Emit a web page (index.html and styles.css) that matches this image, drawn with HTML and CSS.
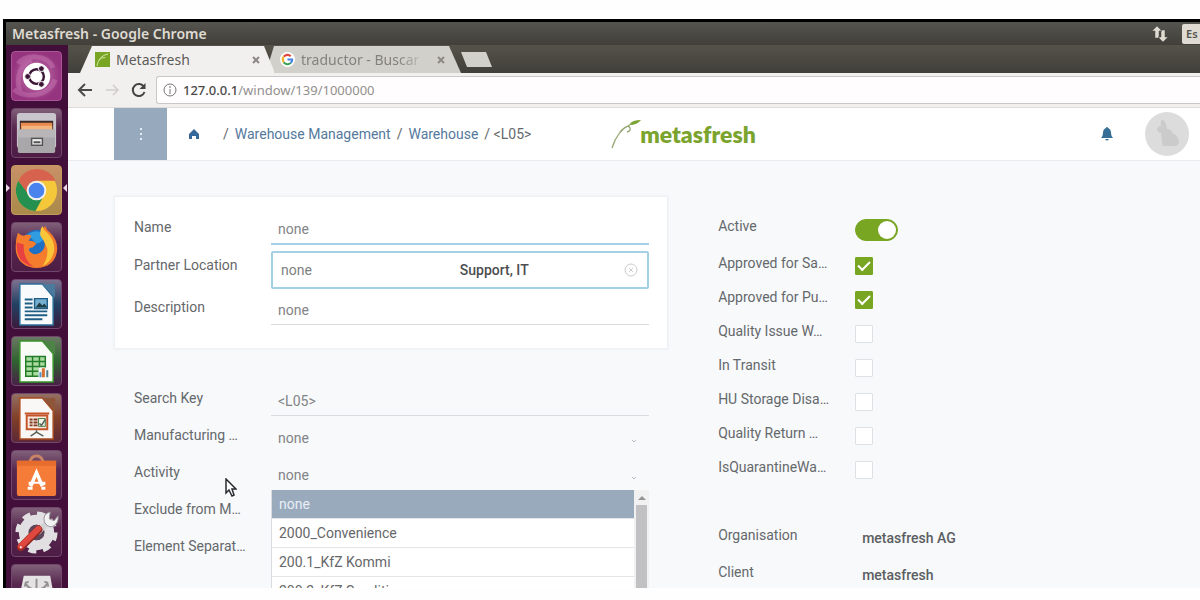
FILE: index.html
```html
<!DOCTYPE html>
<html lang="en">
<head>
  <meta charset="UTF-8" />
  <meta name="viewport" content="width=device-width, initial-scale=1.0"/>
  <title>Metasfresh</title>
  <link rel="stylesheet" href="styles.css">
</head>
<body>
  <div class="desktop">
    <header class="titlebar">
      <span class="titlebar-text">Metasfresh - Google Chrome</span>
      <div class="indicators">
        <svg class="network" viewBox="0 0 16 16"><path d="M5 0L0 5h3v7h4V5h3zM11 16l5-5h-3V4H9v7H6z" fill="#dfdbd2" stroke="#4a4944" stroke-width=".5"/></svg>
        <span class="keyboard">Es</span>
      </div>
    </header>

    <div class="workspace">
      <nav class="launcher" aria-label="Launcher">
        <button class="tile tile-dash" aria-label="Dash">
          <svg viewBox="0 0 50 50">
            <path d="M2 38C12 48 38 46 44 28M6 12C14 2 36 2 42 16M8 40C4 26 8 12 20 8" fill="none" stroke="#d68cc3" stroke-width="5" opacity=".35"/>
            <circle cx="25" cy="25" r="14" fill="#fff"/>
            <circle cx="25" cy="25" r="7.500" fill="none" stroke="#3d1636" stroke-width="2.500"/>
            <g fill="#3d1636" stroke="#fff" stroke-width="1"><circle cx="16" cy="25" r="3"/><circle cx="30" cy="17" r="3"/><circle cx="30" cy="33" r="3"/></g>
          </svg>
        </button>
        <button class="tile" aria-label="Files">
          <svg viewBox="0 0 50 50">
            <rect x="5" y="4" width="40" height="36" rx="3" fill="#c9c5cd"/>
            <path d="M8 12h34v10H8z" fill="#3b2a2b"/>
            <path d="M9 14h32v8H9z" fill="#e98a4e"/><path d="M10 17h31v5H10z" fill="#f5b57f"/>
            <path d="M6 21h38v22q0 2-2 2H8q-2 0-2-2z" fill="#a9a7aa"/><path d="M6 21h38v8H6z" fill="#b8b6b9"/>
            <rect x="20" y="30" width="11" height="7" fill="#eee" stroke="#555" stroke-width="1.500"/>
            <path d="M22 34h7" stroke="#555" stroke-width="2"/>
          </svg>
        </button>
        <button class="tile tile-chrome" aria-label="Google Chrome">
          <svg viewBox="0 0 50 50">
            <circle cx="25" cy="25" r="21" fill="#f5c83b"/>
            <path d="M6.500 15A21 21 0 0 0 24 46L33 29 25 25 17 28z" fill="#25904f"/>
            <path d="M25 15h19.500a21 21 0 0 0-38-0L16 28z" fill="#d7634e"/>
            <circle cx="25" cy="25" r="10" fill="#f6f3ee"/><circle cx="25" cy="25" r="8" fill="#4a83ee"/>
          </svg>
        </button>
        <button class="tile" aria-label="Firefox">
          <svg viewBox="0 0 50 50">
            <circle cx="26" cy="24" r="17" fill="#1f6fc4"/><path d="M16 12q9-7 18 0-2 8-9 9z" fill="#2f9be0"/>
            <path d="M6 10q3 3 6 3 4-2 8 0l-3 5q6 0 8 3l-4 4q-5 0-3 4 5 5 11 1 6-4 4-12-3-5-3-9 1-4 4-6 1 4 5 7 8 8 7 18-2 17-21 18Q7 45 4 29 3 18 6 10z" fill="#f47c2c"/>
            <path d="M31 3q1 4 5 7 8 8 7 18-2 12-12 16 6-8 5-18-3-8-7-13-1-6 2-10z" fill="#fbc53a"/>
            <path d="M5 20q-2 20 17 25-11-8-10-23z" fill="#e8413f"/>
          </svg>
        </button>
        <button class="tile tile-writer" aria-label="LibreOffice Writer">
          <svg viewBox="0 0 50 50">
            <path d="M8 4h23l11 13v29H8z" fill="#f8fafb" stroke="#2b6e99" stroke-width="1.500"/>
            <path d="M31 4h13v14z" fill="#4c7a9c"/>
            <path d="M13 20h8M13 24h8M13 28h8M13 32h23M13 36h23M13 40h18" stroke="#215e86" stroke-width="2"/>
            <path d="M23 19h13v10H23z" fill="#75afd0" stroke="#215e86" stroke-width="1.500"/><path d="M24 28l4-5 3 3 2-2 3 4z" fill="#1e3e46"/>
          </svg>
        </button>
        <button class="tile tile-calc" aria-label="LibreOffice Calc">
          <svg viewBox="0 0 50 50">
            <path d="M8 4h23l11 13v29H8z" fill="#f8fbf6" stroke="#379329" stroke-width="1.500"/>
            <path d="M31 4h13v14z" fill="#4e8348"/>
            <path d="M14 20h20v20H14z" fill="#a9dba0"/>
            <path d="M14 20h20v20H14zM14 25h20M14 30h20M14 35h20M21 20v20M28 20v20" fill="none" stroke="#237c28" stroke-width="1.500"/>
            <path d="M27 31h10v10H27z" fill="#f3f4f4"/><path d="M29 41v-5" stroke="#4c90c5" stroke-width="2"/><path d="M32 41V32" stroke="#d47130" stroke-width="3"/><path d="M36 41v-7" stroke="#557b91" stroke-width="2"/>
          </svg>
        </button>
        <button class="tile tile-impress" aria-label="LibreOffice Impress">
          <svg viewBox="0 0 50 50">
            <path d="M8 4h23l11 13v29H8z" fill="#faf8f6" stroke="#a94b20" stroke-width="1.500"/>
            <path d="M31 4h13v14z" fill="#8f5538"/>
            <path d="M15 22h21v14H15z" fill="#fae9dc" stroke="#c4552a" stroke-width="2"/><path d="M13 20h25" stroke="#c4552a" stroke-width="2"/>
            <path d="M18 26h3M18 29h3M18 32h3M22 26h4M22 29h4M22 32h4" stroke="#7c3b28" stroke-width="2"/>
            <path d="M27 25h7v8h-7z" fill="#eff4e7" stroke="#477e4d"/><path d="M28 30l2 2 4-6M25 37v2l-6 4M25 39l7 4" fill="none" stroke="#576056" stroke-width="1.500"/>
          </svg>
        </button>
        <button class="tile" aria-label="Ubuntu Software">
          <svg viewBox="0 0 50 50">
            <path d="M18 13q1-8 7-8t7 8" fill="none" stroke="#c98467" stroke-width="3"/>
            <path d="M5 10h40v34q0 2-2 2H7q-2 0-2-2z" fill="#f47c38"/><path d="M5 10h40v5H5z" fill="#e56c2d"/>
            <path d="M19 36l6-14 6 14M17 33h17" fill="none" stroke="#fff" stroke-width="3.500"/><path d="M22 35h6" stroke="#f47c38" stroke-width="3"/>
            <path d="M16 38h5M30 38h4" stroke="#fff" stroke-width="3"/>
          </svg>
        </button>
        <button class="tile" aria-label="System Settings">
          <svg viewBox="0 0 50 50">
            <circle cx="25" cy="25" r="13" fill="none" stroke="#e1dfe2" stroke-width="10"/>
            <circle cx="25" cy="25" r="19" fill="none" stroke="#e1dfe2" stroke-width="5" stroke-dasharray="8 6.920"/>
            <circle cx="25" cy="25" r="8" fill="#5c4659"/>
            <path d="M26 25L37 14" stroke="#d2d1d3" stroke-width="6"/>
            <path d="M33 14q-2-8 6-10l-1 7 5 2 4-5q1 8-6 11-5 1-8-5z" fill="#f2f2f2" stroke="#99939a"/>
            <path d="M9 40L27 22" stroke="#922825" stroke-width="8" stroke-linecap="round"/><path d="M9 39L27 21" stroke="#df483e" stroke-width="6" stroke-linecap="round"/><circle cx="9" cy="40" r="1" fill="#fff"/>
          </svg>
        </button>
        <button class="tile" aria-label="Removable drive">
          <svg viewBox="0 0 50 50">
            <path d="M12 11h27l7 39H4z" fill="#e4e2e3"/>
            <path d="M25 14v14M14 18q2 7 11 7 9 0 11-7M17 17l-3 1-1 4M33 17l3 1 1 4" fill="none" stroke="#929092" stroke-width="2"/>
          </svg>
        </button>
        <span class="running"></span>
        <span class="focused"></span>
      </nav>

      <main class="browser">
        <div class="tabs">
          <div class="tab tab-active">
            <svg class="favicon" viewBox="0 0 16 16"><path d="M0 0h16v16H0z" fill="#78a524"/><path d="M2 15Q4 4 14 2M4 9q3-4 7-3" fill="none" stroke="#d9eaa9"/></svg>
            <span class="tab-title">Metasfresh</span>
            <button class="tab-close" aria-label="Close tab"><svg viewBox="0 0 8 8"><path d="M1 1l6 6M7 1L1 7"/></svg></button>
          </div>
          <div class="tab tab-back">
            <svg class="favicon" viewBox="0 0 16 16">
              <circle cx="8" cy="8" r="8" fill="#fff"/>
              <g fill="none" stroke-width="2.200"><path d="M4 5A5 5 0 0 1 11.500 4.500" stroke="#e0483d"/><path d="M4 5a5 5 0 0 0 0 6" stroke="#eeb22c"/><path d="M4 11a5 5 0 0 0 7.500 .6" stroke="#35a354"/><path d="M8 8h5q0 2-1.500 3.600" stroke="#4580e8"/></g>
            </svg>
            <span class="tab-title tab-faded">traductor - Buscar</span>
            <button class="tab-close" aria-label="Close tab"><svg viewBox="0 0 8 8"><path d="M1 1l6 6M7 1L1 7"/></svg></button>
          </div>
          <button class="new-tab" aria-label="New tab"></button>
        </div>

        <div class="toolbar">
          <button class="tool" aria-label="Back"><svg viewBox="0 0 16 16"><path d="M15 8H2M8 2L2 8l6 6" stroke="#4d4b48"/></svg></button>
          <button class="tool" aria-label="Forward"><svg viewBox="0 0 16 16"><path d="M2 8h12M9 3l5 5-5 5" stroke="#d0cdca" stroke-width="1.500"/></svg></button>
          <button class="tool" aria-label="Reload"><svg viewBox="0 0 16 16"><path d="M13 5A6 6 0 1 0 13.500 10" stroke="#454340"/><path d="M14.500 1v6h-6z" fill="#454340"/></svg></button>
          <div class="address">
            <svg class="info" viewBox="0 0 14 14"><circle cx="7" cy="7" r="6"/><path d="M7 6v5M7 3v2"/></svg>
            <a class="url" href="#"><b>127.0.0.1</b>/window/139/1000000</a>
          </div>
        </div>

        <header class="app-header">
          <button class="menu-button" aria-label="Menu"><i></i><i></i><i></i></button>
          <nav class="breadcrumb" aria-label="Breadcrumb">
            <a class="home" href="#" aria-label="Home"><svg viewBox="0 0 12 12"><path d="M6 1L1 6v5h3V8h4v3h3V6z" fill="#35699b"/></svg></a>
            <span>/</span>
            <a href="#">Warehouse Management</a>
            <span>/</span>
            <a href="#">Warehouse</a>
            <span class="crumb-last">/ &lt;L05&gt;</span>
          </nav>
          <a class="logo" href="#">
            <svg viewBox="0 0 30 30"><path d="M1 29Q6 12 20 5M9 13Q17 4 19 9q1 3-3 4" fill="none" stroke="#94a773" stroke-width="1.300"/><path d="M19 5q2-4 11-4-3 4-9 5-2 0-2-1z" fill="#7ba334"/></svg>
            <span>metasfresh</span>
          </a>
          <div class="user">
            <button class="bell" aria-label="Notifications"><svg viewBox="0 0 12 14"><path d="M6 0q1 0 1 1 3 1 3 5 0 3 2 5H0q2-2 2-5 0-4 3-5 0-1 1-1zM4 12h4q-2 3-4 0z" fill="#356f98"/></svg></button>
            <button class="avatar" aria-label="Account"><svg viewBox="0 0 44 44"><path d="M18 8q3 2 4 9 5 0 5 4 6 2 7 9 0 3-3 4H20q-4 0-3-6-1-5-1-7-4-1-4-4 1-3 4-3-1-5 1-6z" fill="#cbcbcc"/></svg></button>
          </div>
        </header>

        <div class="content">
          <div class="left">
            <section class="panel">
              <div class="row">
                <label for="name">Name</label>
                <input id="name" class="field field-changed" value="none">
              </div>
              <div class="row row-lookup">
                <label for="partner">Partner Location</label>
                <div class="lookup">
                  <input id="partner" value="none">
                  <input class="lookup-value" aria-label="Location" value="Support, IT">
                  <button aria-label="Clear"><svg viewBox="0 0 14 14"><circle cx="7" cy="7" r="6"/><path d="M5 5l4 4M9 5L5 9"/></svg></button>
                </div>
              </div>
              <div class="row">
                <label for="description">Description</label>
                <input id="description" class="field" value="none">
              </div>
            </section>

            <section class="details">
              <div class="row">
                <label for="search-key">Search Key</label>
                <input id="search-key" class="field" value="&lt;L05&gt;">
              </div>
              <div class="row">
                <label for="manufacturing">Manufacturing …</label>
                <div class="dropdown">
                  <select id="manufacturing"><option>none</option></select>
                  <svg class="chevron" viewBox="0 0 6 4"><path d="M1 1l2 2 2-2"/></svg>
                </div>
              </div>
              <div class="row">
                <label for="activity">Activity</label>
                <div class="dropdown">
                  <select id="activity"><option>none</option></select>
                  <svg class="chevron" viewBox="0 0 6 4"><path d="M1 1l2 2 2-2"/></svg>
                  <div class="options">
                    <ul role="listbox" aria-label="Activity">
                      <li role="option" aria-selected="true" class="selected">none</li>
                      <li role="option">2000_Convenience</li>
                      <li role="option">200.1_KfZ Kommi</li>
                      <li role="option">200.2_KfZ Spedition</li>
                    </ul>
                    <div class="scrollbar"><i class="scroll-up"></i><i class="thumb"></i></div>
                  </div>
                </div>
              </div>
              <div class="row"><span class="label">Exclude from M…</span></div>
              <div class="row"><span class="label">Element Separat…</span></div>
            </section>
          </div>

          <section class="right">
            <div class="check-row check-row-switch"><label for="active">Active</label><input id="active" class="switch" type="checkbox" checked></div>
            <div class="check-row"><label for="sales">Approved for Sa…</label><input id="sales" type="checkbox" checked></div>
            <div class="check-row"><label for="purchase">Approved for Pu…</label><input id="purchase" type="checkbox" checked></div>
            <div class="check-row"><label for="issue">Quality Issue W…</label><input id="issue" type="checkbox"></div>
            <div class="check-row"><label for="transit">In Transit</label><input id="transit" type="checkbox"></div>
            <div class="check-row"><label for="storage">HU Storage Disa…</label><input id="storage" type="checkbox"></div>
            <div class="check-row"><label for="return">Quality Return …</label><input id="return" type="checkbox"></div>
            <div class="check-row"><label for="quarantine">IsQuarantineWa…</label><input id="quarantine" type="checkbox"></div>
            <dl class="owner">
              <dt>Organisation</dt><dd>metasfresh AG</dd>
              <dt>Client</dt><dd>metasfresh</dd>
            </dl>
          </section>
        </div>
      </main>
    </div>

    <svg class="pointer" viewBox="0 0 12 19"><path d="M1 1v14l3-3 3 6 2-1-2-6h4z" fill="#fff" stroke="#2b2b30" stroke-width="1.500"/></svg>
  </div>
</body>
</html>
```
FILE: styles.css
```css
* {
  box-sizing: border-box;
}

html, body {
  margin: 0;
  height: 100%;
}

body {
  padding: 19px 0 12px 3px;
  background: #fefefe;
  color: #65686b;
  font-family: Roboto, sans-serif;
  font-size: 14px;
  line-height: 20px;
  overflow: hidden;
}

button, input, select {
  margin: 0;
  padding: 0;
  border: 0;
  background: none;
  color: inherit;
  font: inherit;
}

svg {
  display: block;
}

a {
  color: #55799c;
  text-decoration: none;
}

.desktop {
  position: relative;
  display: flex;
  flex-direction: column;
  height: 100%;
  border-top: 3px solid #000;
  border-left: 3px solid #000;
  overflow: hidden;
}

/* top panel */
.titlebar {
  display: flex;
  flex: none;
  align-items: center;
  justify-content: space-between;
  height: 23px;
  padding-left: 6px;
  background: linear-gradient(#55544e, #403f3a);
  color: #dfdbd2;
  font-family: "Noto Sans", sans-serif;
  font-weight: 600;
}

.indicators {
  display: flex;
  align-items: center;
  gap: 14px;
}

.network {
  width: 16px;
  height: 16px;
}

.keyboard {
  width: 18px;
  padding-left: 4px;
  background: #dfdbd2;
  color: #55534f;
  font-size: 11px;
  border-radius: 2px 0 0 2px;
}

.workspace {
  display: flex;
  flex: 1;
  min-height: 0;
}

/* launcher */
.launcher {
  position: relative;
  display: flex;
  flex: none;
  flex-direction: column;
  align-items: center;
  gap: 7px;
  width: 62px;
  padding: 6px 1px 0 0;
  background: #420f3b;
}

.tile {
  flex: none;
  width: 51px;
  height: 50px;
  border: 1px solid #71476b;
  border-radius: 4px;
  background: linear-gradient(#806079, #57274f 40%, #4d1d46);
  overflow: hidden;
}

.tile-dash {
  background: radial-gradient(#c678b2, #96357f 70%);
  border-color: #ac5399;
}

.tile-chrome {
  background: linear-gradient(#c99168, #a98a49);
  border-color: #c29c5d;
}

.tile-writer {
  background: linear-gradient(#7d7190, #224263 50%, #3b1a3d);
}

.tile-calc {
  background: linear-gradient(#6b7864, #2f6430 50%, #482047);
}

.tile-impress {
  background: linear-gradient(#937064, #803f29 50%, #5d2836);
}

.running, .focused {
  position: absolute;
  top: 139px;
  border: 4px solid transparent;
}

.running {
  left: 0;
  border-left-color: #ead8e7;
  border-right: 0;
}

.focused {
  right: 1px;
  border-right-color: #ead8e7;
  border-left: 0;
}

/* browser chrome */
.browser {
  display: flex;
  flex: 1;
  flex-direction: column;
  min-width: 0;
  background: #f7f9fb;
}

.tabs {
  display: flex;
  flex: none;
  height: 28px;
  padding: 1px 0 0 12px;
  background: linear-gradient(#555349, #403f3a);
  font-family: "Noto Sans", sans-serif;
}

.tab {
  display: flex;
  align-items: center;
  gap: 6px;
  width: 195px;
  padding: 0 14px 0 15px;
  clip-path: polygon(12px 0, 184px 0, 100% 100%, 0 100%);
}

.tab-active {
  z-index: 1;
  background: #f2f0ee;
  color: #5d5b58;
}

.tab-back {
  width: 192px;
  margin-left: -6px;
  padding: 0 15px 0 11px;
  background: #d2d0cb;
  color: #84827e;
  clip-path: polygon(5px 0, 180px 0, 100% 100%, 6px 100%, 0 60%);
}

.favicon {
  flex: none;
  width: 15px;
  height: 15px;
}

.tab-title {
  flex: 1;
  white-space: nowrap;
  overflow: hidden;
}

.tab-faded {
  -webkit-mask-image: linear-gradient(90deg, #000 75%, transparent 96%);
  mask-image: linear-gradient(90deg, #000 75%, transparent 96%);
}

.tab-close {
  width: 8px;
  height: 8px;
  margin-right: 1px;
}

.tab-close svg {
  fill: none;
  stroke: #8c8986;
  stroke-width: 2;
}

.new-tab {
  width: 31px;
  height: 15px;
  margin-top: 6px;
  background: #d2d0cb;
  clip-path: polygon(0 0, 25px 0, 100% 100%, 6px 100%);
}

.toolbar {
  display: flex;
  flex: none;
  align-items: center;
  gap: 11px;
  height: 35px;
  padding-left: 9px;
  background: #f2f0ee;
  border-bottom: 1px solid #dcdbda;
}

.tool {
  flex: none;
  width: 16px;
  height: 16px;
}

.tool svg {
  fill: none;
  stroke-width: 2;
}

.address {
  display: flex;
  flex: 1;
  align-items: center;
  gap: 6px;
  height: 28px;
  margin-left: -2px;
  padding-left: 6px;
  background: #fffdfd;
  border: 1px solid #cbc9c8;
  border-right: 0;
  border-radius: 3px 0 0 3px;
}

.info {
  width: 14px;
  height: 14px;
  fill: none;
  stroke: #777;
}

.url {
  color: #92908f;
  font-family: "Noto Sans", sans-serif;
  font-size: 13px;
}

.url b {
  color: #4b4a49;
  font-weight: 500;
}

/* application header */
.app-header {
  display: grid;
  flex: none;
  grid-template-columns: 53px 1fr auto 1fr;
  align-items: center;
  height: 53px;
  padding-left: 46px;
  background: #fff;
  border-bottom: 1px solid #e9ecef;
}

.menu-button {
  display: flex;
  flex-direction: column;
  align-items: center;
  justify-content: center;
  gap: 3px;
  height: 52px;
  background: #97aabd;
}

.menu-button i {
  width: 2px;
  height: 2px;
  background: #e6edf4;
}

.breadcrumb {
  display: flex;
  align-items: center;
  gap: 6px;
  padding-left: 21px;
  white-space: nowrap;
}

.home {
  margin-right: 17px;
}

.home svg {
  width: 12px;
  height: 12px;
}

.logo {
  display: flex;
  align-items: center;
  color: #7ba42f;
  font-family: Lato, sans-serif;
  font-size: 23px;
  font-weight: 800;
}

.logo svg {
  width: 30px;
  height: 30px;
  margin-right: -1px;
}

.user {
  display: flex;
  align-items: center;
  justify-content: flex-end;
  gap: 32px;
  padding-right: 11px;
}

.bell {
  width: 12px;
  height: 14px;
}

.avatar {
  width: 44px;
  height: 44px;
  border-radius: 50%;
  background: #dcdcdd;
}

/* record */
.content {
  display: grid;
  flex: 1;
  grid-template-columns: minmax(0, 23fr) minmax(0, 20fr);
  align-items: start;
  gap: 50px;
  min-height: 0;
  padding: 35px 0 0 46px;
}

.panel, .details {
  display: flex;
  flex-direction: column;
  gap: 6px;
  padding: 18px 18px 23px 19px;
  border: 1px solid #eef1f3;
}

.panel {
  background: #fff;
  box-shadow: 0 0 3px #e9edf0;
}

.details {
  gap: 7px;
  padding-top: 36px;
  border-color: transparent;
}

.row {
  display: grid;
  grid-template-columns: 137px minmax(0, 1fr);
  align-items: start;
  min-height: 30px;
}

.row label, .label {
  padding-top: 2px;
}

.row-lookup label {
  padding-top: 4px;
}

.field, .dropdown select {
  width: 100%;
  height: 30px;
  padding: 0 7px;
  color: #828486;
  border-bottom: 1px solid #d9dcde;
}

.field-changed {
  border-bottom: 2px solid #a4d0ea;
}

.lookup {
  display: flex;
  align-items: center;
  height: 38px;
  padding: 0 9px 0 8px;
  background: #fff;
  border: 2px solid #a4d0e6;
  border-radius: 2px;
}

.lookup input {
  flex: 1;
  min-width: 0;
  color: #7d7f81;
}

.lookup .lookup-value {
  flex: 0 0 46%;
  color: #4c4e51;
  font-weight: 500;
}

.lookup button {
  width: 14px;
  height: 14px;
}

.lookup svg {
  fill: none;
  stroke: #ccc;
}

.dropdown {
  position: relative;
}

.dropdown select {
  appearance: none;
  border-bottom: 0;
  border-radius: 0;
}

.chevron {
  position: absolute;
  top: 16px;
  right: 12px;
  width: 6px;
  height: 4px;
  fill: none;
  stroke: #bbbfc3;
}

.options {
  position: absolute;
  top: 30px;
  left: 0;
  right: 0;
  display: flex;
  background: #fff;
  border-left: 1px solid #d8dcdf;
}

.options ul {
  flex: 1;
  margin: 0;
  padding: 0;
  list-style: none;
}

.options li {
  height: 29px;
  padding: 4px 7px;
  color: #65676a;
  border-bottom: 1px solid #e3e5e6;
}

.options .selected {
  background: #9aaabd;
  color: #e9eff6;
}

.scrollbar {
  display: flex;
  flex-direction: column;
  align-items: center;
  gap: 5px;
  width: 15px;
  padding-top: 6px;
  background: #f1f1f2;
}

.scroll-up {
  border: 4px solid transparent;
  border-top: 0;
  border-bottom-color: #949494;
}

.thumb {
  flex: 1;
  width: 11px;
  background: #c1c1c3;
}

.right {
  padding-top: 20px;
}

.check-row {
  display: grid;
  grid-template-columns: 137px 1fr;
  align-items: start;
  height: 34px;
}

.check-row-switch {
  height: 37px;
}

.check-row input {
  appearance: none;
  width: 18px;
  height: 18px;
  margin-top: 4px;
  background: #fff;
  border: 1px solid #dfe2e4;
  border-radius: 1px;
}

.check-row input:checked {
  display: grid;
  place-items: center;
  background: #78a522;
  border-color: #78a522;
}

.check-row input:checked::before {
  content: "";
  width: 10px;
  height: 5px;
  margin-bottom: 3px;
  border: solid #fff;
  border-width: 0 0 2px 2px;
  transform: rotate(-45deg);
}

.check-row .switch {
  width: 43px;
  height: 22px;
  margin-top: 3px;
  border-radius: 11px;
}

.check-row .switch:checked {
  justify-content: end;
}

.check-row .switch:checked::before {
  width: 18px;
  height: 18px;
  margin: 0 1px;
  background: #fff;
  border: 0;
  border-radius: 50%;
}

.owner {
  display: grid;
  grid-template-columns: 144px 1fr;
  row-gap: 14px;
  margin: 34px 0 0;
}

.owner dd {
  margin: 0;
  padding-top: 3px;
  color: #5b5e61;
  font-weight: 500;
}

.pointer {
  position: absolute;
  top: 456px;
  left: 219px;
  width: 12px;
  height: 19px;
}
```
